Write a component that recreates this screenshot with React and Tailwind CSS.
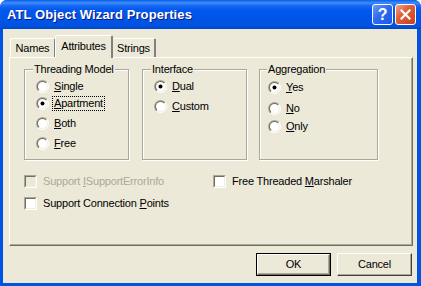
import React from "react";

const UI = "[font-family:'Liberation_Sans',Arial,sans-serif] text-[11px] leading-[13px] tracking-[-0.2px] text-black";

function Radio({ checked }) {
  return (
    <svg width="13" height="13" viewBox="0 0 13 13" className="shrink-0">
      <defs>
        <linearGradient id="rOut" x1="0" y1="0" x2="1" y2="1">
          <stop offset="0.5" stopColor="#ACA899" />
          <stop offset="0.5" stopColor="#FFFFFF" />
        </linearGradient>
        <linearGradient id="rIn" x1="0" y1="0" x2="1" y2="1">
          <stop offset="0.5" stopColor="#716F64" />
          <stop offset="0.5" stopColor="#F1EFE2" />
        </linearGradient>
      </defs>
      <circle cx="6.5" cy="6.5" r="6.5" fill="url(#rOut)" />
      <circle cx="6.5" cy="6.5" r="5.5" fill="url(#rIn)" />
      <circle cx="6.5" cy="6.5" r="4.5" fill="#FFFFFF" />
      {checked && <circle cx="6.5" cy="6.5" r="2" fill="#000000" />}
    </svg>
  );
}

function Check({ disabled }) {
  return (
    <span className="block w-[13px] h-[13px] shrink-0 border border-t-[#ACA899] border-l-[#ACA899] border-r-white border-b-white">
      <span
        className={`block w-full h-full border border-t-[#716F64] border-l-[#716F64] border-r-[#F1EFE2] border-b-[#F1EFE2] ${
          disabled ? "bg-[#ECE9D8]" : "bg-white"
        }`}
      />
    </span>
  );
}

function Option({ checked, focus, k, rest, className = "" }) {
  return (
    <div className={`flex items-center h-[13px] ${className}`}>
      <Radio checked={checked} />
      {focus ? (
        <span className="ml-[4px] px-[1px] outline-1 outline-dotted outline-black">
          <u>{k}</u>
          {rest}
        </span>
      ) : (
        <span className="ml-[5px]">
          <u>{k}</u>
          {rest}
        </span>
      )}
    </div>
  );
}

function Group({ title, titleLeft, width, padLeft, children }) {
  return (
    <div
      className={`relative h-[91px] border border-[#ACA899] shadow-[inset_1px_1px_0_#fff,1px_1px_0_#fff] ${width} ${padLeft}`}
    >
      <span className={`absolute -top-[7px] ${titleLeft} bg-[#ECE9D8] px-[1px]`}>{title}</span>
      {children}
    </div>
  );
}

export default function App() {
  return (
    <div className={`w-[421px] h-[286px] bg-white ${UI}`}>
      <div className="w-full h-full flex flex-col rounded-t-[7px] bg-[#0054E3] overflow-hidden">
        {/* Title bar */}
        <div className="h-[29px] shrink-0 flex items-center pl-[7px] pr-[5px] bg-[linear-gradient(to_bottom,#0A5DEA_0%,#3D8EF9_10%,#1767F2_20%,#0058EE_35%,#0054E6_70%,#0052E0_90%,#0046C8_100%)]">
          <span className="flex-1 text-white font-bold text-[13px] leading-[16px] tracking-[0.1px] [text-shadow:1px_1px_0_#0A1883] pt-[1px]">
            ATL Object Wizard Properties
          </span>
          <div className="flex gap-[2px]">
            <div className="w-[21px] h-[21px] rounded-[3px] border border-white bg-[linear-gradient(135deg,#6E9BF8_0%,#2D6BEF_45%,#1D57E2_100%)] flex items-center justify-center text-white font-bold text-[16px] leading-none">
              ?
            </div>
            <div className="w-[21px] h-[21px] rounded-[3px] border border-white bg-[linear-gradient(135deg,#F2A38A_0%,#E1603A_40%,#C9401D_100%)] flex items-center justify-center">
              <svg width="11" height="11" viewBox="0 0 11 11">
                <path d="M1.5 1.5 L9.5 9.5 M9.5 1.5 L1.5 9.5" stroke="#fff" strokeWidth="2.2" strokeLinecap="square" />
              </svg>
            </div>
          </div>
        </div>

        {/* Body */}
        <div className="flex-1 ml-[3px] mr-[4px] mb-[3px] bg-[#ECE9D8] flex flex-col">
          {/* Tabs */}
          <div className="flex items-end h-[28px] pl-[7px] pt-[6px]">
            <div className="w-[45px] h-[19px] flex items-center justify-center bg-[#ECE9D8] border-l border-t border-white border-r border-r-[#808080] rounded-t-[2px] pt-[1px]">
              Names
            </div>
            <div className="relative z-10 w-[58px] h-[23px] -mb-[1px] flex items-start justify-center pt-[4px] bg-[#ECE9D8] border-l border-t border-white border-r-2 border-r-[#808080] rounded-t-[2px]">
              Attributes
            </div>
            <div className="w-[43px] h-[19px] flex items-center justify-center bg-[#ECE9D8] border-t border-white border-r-2 border-r-[#808080] rounded-t-[2px] pt-[1px]">
              Strings
            </div>
          </div>

          {/* Panel */}
          <div className="ml-[6px] w-[404px] h-[189px] border border-l-white border-t-white border-r-[#716F64] border-b-[#716F64] shadow-[inset_-1px_-1px_0_#ACA899] pl-[14px] pt-[11px]">
            <div className="flex">
              <Group title="Threading Model" titleLeft="left-[8px]" width="w-[105px]" padLeft="pl-[11px]">
                <Option className="mt-[10px]" k="S" rest="ingle" />
                <Option className="mt-[4px]" checked focus k="A" rest="partment" />
                <Option className="mt-[7px]" k="B" rest="oth" />
                <Option className="mt-[7px]" k="F" rest="ree" />
              </Group>
              <div className="ml-[13px]">
                <Group title="Interface" titleLeft="left-[8px]" width="w-[105px]" padLeft="pl-[11px]">
                  <Option className="mt-[10px]" checked k="D" rest="ual" />
                  <Option className="mt-[7px]" k="C" rest="ustom" />
                </Group>
              </div>
              <div className="ml-[12px]">
                <Group title="Aggregation" titleLeft="left-[7px]" width="w-[119px]" padLeft="pl-[8px]">
                  <Option className="mt-[11px]" checked k="Y" rest="es" />
                  <Option className="mt-[8px]" k="N" rest="o" />
                  <Option className="mt-[5px]" k="O" rest="nly" />
                </Group>
              </div>
            </div>

            <div className="mt-[15px] flex h-[13px] items-center">
              <div className="w-[189px] flex items-center">
                <Check disabled />
                <span className="ml-[6px] text-[#ACA899]">
                  Support <u>I</u>SupportErrorInfo
                </span>
              </div>
              <div className="flex items-center">
                <Check />
                <span className="ml-[6px]">
                  Free Threaded <u>M</u>arshaler
                </span>
              </div>
            </div>
            <div className="mt-[9px] flex h-[13px] items-center">
              <Check />
              <span className="ml-[6px]">
                Support Connection <u>P</u>oints
              </span>
            </div>
          </div>

          {/* Buttons */}
          <div className="mt-[7px] mr-[5px] flex justify-end gap-[6px]">
            <div className="w-[75px] h-[23px] border border-black">
              <div className="w-full h-full flex items-center justify-center border border-t-white border-l-white border-r-[#716F64] border-b-[#716F64] shadow-[inset_-1px_-1px_0_#ACA899]">
                OK
              </div>
            </div>
            <div className="w-[75px] h-[23px] flex items-center justify-center border border-t-white border-l-white border-r-[#404040] border-b-[#404040] shadow-[inset_-1px_-1px_0_#ACA899]">
              Cancel
            </div>
          </div>
        </div>
      </div>
    </div>
  );
}
